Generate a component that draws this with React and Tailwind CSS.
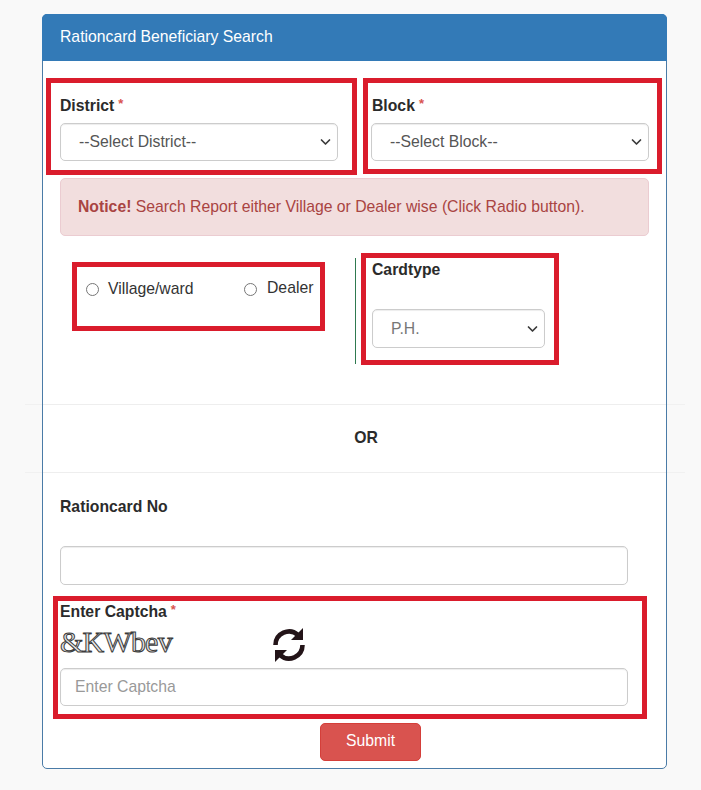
import React from "react";

const Req = () => <span className="text-[#d9534f] text-[13px] ml-[4px] relative -top-[3px]">*</span>;

const Annot = ({ className }) => (
  <div className={`absolute border-[5px] border-[#da1c2c] pointer-events-none ${className}`} />
);

const Select = ({ width, height, label, color, mt }) => (
  <div className={`relative ${width} ${height} ${mt}`}>
    <select
      className={`block appearance-none w-full h-full bg-white border border-[#ccc] rounded-[5px] pl-[18px] pr-[24px] text-[15.75px] ${color} shadow-[inset_0_1px_1px_rgba(0,0,0,0.075)] font-['Liberation_Sans',sans-serif]`}
      defaultValue="x"
    >
      <option value="x">{label}</option>
    </select>
    <svg viewBox="0 0 11 7" className="absolute right-[7px] top-1/2 -translate-y-1/2 w-[11px] h-[7px] pointer-events-none" fill="none" stroke="#3a3a3a" strokeWidth="1.7" strokeLinecap="round" strokeLinejoin="round">
      <path d="M1.5 1.5 L5.5 5.5 L9.5 1.5" />
    </svg>
  </div>
);

const Refresh = () => (
  <svg viewBox="0 0 34 36" className="w-[34px] h-[36px] mt-[6px] text-[#231418]" fill="none">
    <path d="M3.5 18 A13.5 13.5 0 0 1 26 8" stroke="currentColor" strokeWidth="4.6" />
    <path d="M30.5 18 A13.5 13.5 0 0 1 8 28" stroke="currentColor" strokeWidth="4.6" />
    <path d="M31 1 L31 13 L19 13 Z" fill="currentColor" />
    <path d="M3 35 L3 23 L15 23 Z" fill="currentColor" />
  </svg>
);

const inputCls =
  "block w-[568px] bg-white border border-[#ccc] rounded-[5px] px-[14px] text-[15.75px] text-[#555] placeholder:text-[#999] shadow-[inset_0_1px_1px_rgba(0,0,0,0.075)]";

export default function App() {
  return (
    <div className="relative h-[790px] overflow-hidden bg-[#f9f9f9] pt-[14px] pl-[42px] font-['Liberation_Sans',sans-serif] text-[15.75px] text-[#333]">
      <div className="absolute left-[25px] w-[660px] top-[404px] h-px bg-[#f1f1f1]" />
      <div className="absolute left-[25px] w-[660px] top-[472px] h-px bg-[#f1f1f1]" />

      <div className="relative w-[625px] h-[755px] bg-white border border-[#4a7ba7] rounded-[5px]">
        <div className="h-[47px] -mt-px -mx-px bg-[#337ab7] rounded-t-[5px] text-white flex items-center pl-[18px] pb-[2px]">
          Rationcard Beneficiary Search
        </div>

        <div className="px-[17px]">
          <div className="flex gap-[33px] pt-[34px]">
            <div className="w-[278px]">
              <div className="h-[20px] leading-[22px] font-bold text-[#2b2b2b]">District<Req /></div>
              <Select width="w-[278px]" height="h-[38px]" mt="mt-[8px]" label="--Select District--" color="text-[#555]" />
            </div>
            <div className="w-[278px]">
              <div className="h-[20px] leading-[22px] font-bold text-[#2b2b2b] pl-px">Block<Req /></div>
              <Select width="w-[278px]" height="h-[38px]" mt="mt-[8px]" label="--Select Block--" color="text-[#555]" />
            </div>
          </div>

          <div className="mt-[17px] w-[589px] h-[58px] flex items-center pl-[17px] bg-[#f2dede] border border-[#ebccd1] rounded-[5px] text-[#a94442]">
            <span><b>Notice!</b> Search Report either Village or Dealer wise (Click Radio button).</span>
          </div>

          <div className="flex mt-[22px] h-[106px]">
            <div className="w-[295px] relative flex items-start pl-[26px] pt-[19px]">
              <label className="flex items-center w-[158px]">
                <input type="radio" name="t" className="w-[13px] h-[13px] mt-[1px]" />
                <span className="ml-[9px] text-[#333]">Village/ward</span>
              </label>
              <label className="flex items-center -mt-px">
                <input type="radio" name="t" className="w-[13px] h-[13px] mt-[3px]" />
                <span className="ml-[10px] text-[#333]">Dealer</span>
              </label>
            </div>
            <div className="w-px h-[106px] bg-[#2f7a50]" />
            <div className="pl-[16px]">
              <div className="pt-[2px] leading-[20px] font-bold text-[#2b2b2b]">Cardtype</div>
              <Select width="w-[173px]" height="h-[39px]" mt="mt-[29px]" label="P.H." color="text-[#777]" />
            </div>
          </div>

          <div className="mt-[40px] h-px bg-[#eeeeee] -mx-[17px]" />
          <div className="h-[67px] flex items-center justify-center font-bold text-[#2b2b2b] pl-[23px] pb-[2px]">OR</div>
          <div className="h-px bg-[#eeeeee] -mx-[17px]" />

          <div className="mt-[24px] leading-[20px] -mb-px font-bold text-[#2b2b2b]">Rationcard No</div>
          <input type="text" className={`${inputCls} h-[39px] mt-[30px]`} />

          <div className="mt-[18px] leading-[18px] -mb-px font-bold text-[#2b2b2b]">Enter Captcha<Req /></div>
          <div className="flex items-start h-[46px]">
            <span className="w-[212px] mt-[7px] font-['Liberation_Serif',serif] text-[30px] leading-[28px] font-normal text-[#e4e4e4] [-webkit-text-stroke:1px_#3a3a3a] tracking-[-0.8px]">
              &amp;KWbev
            </span>
            <Refresh />
          </div>
          <input type="text" placeholder="Enter Captcha" className={`${inputCls} h-[38px] mt-[1px]`} />

          <div className="flex mt-[17px] pl-[260px]">
            <button className="w-[101px] h-[38px] pb-[2px] bg-[#d9534f] border border-[#d43f3a] rounded-[5px] text-white text-[15.75px]">
              Submit
            </button>
          </div>
        </div>

        <Annot className="left-[3px] top-[63px] w-[311px] h-[97px]" />
        <Annot className="left-[320px] top-[63px] w-[299px] h-[96px]" />
        <Annot className="left-[29px] top-[247px] w-[253px] h-[69px]" />
        <Annot className="left-[318px] top-[238px] w-[198px] h-[112px]" />
        <Annot className="left-[10px] top-[581px] w-[594px] h-[123px]" />
      </div>
    </div>
  );
}
